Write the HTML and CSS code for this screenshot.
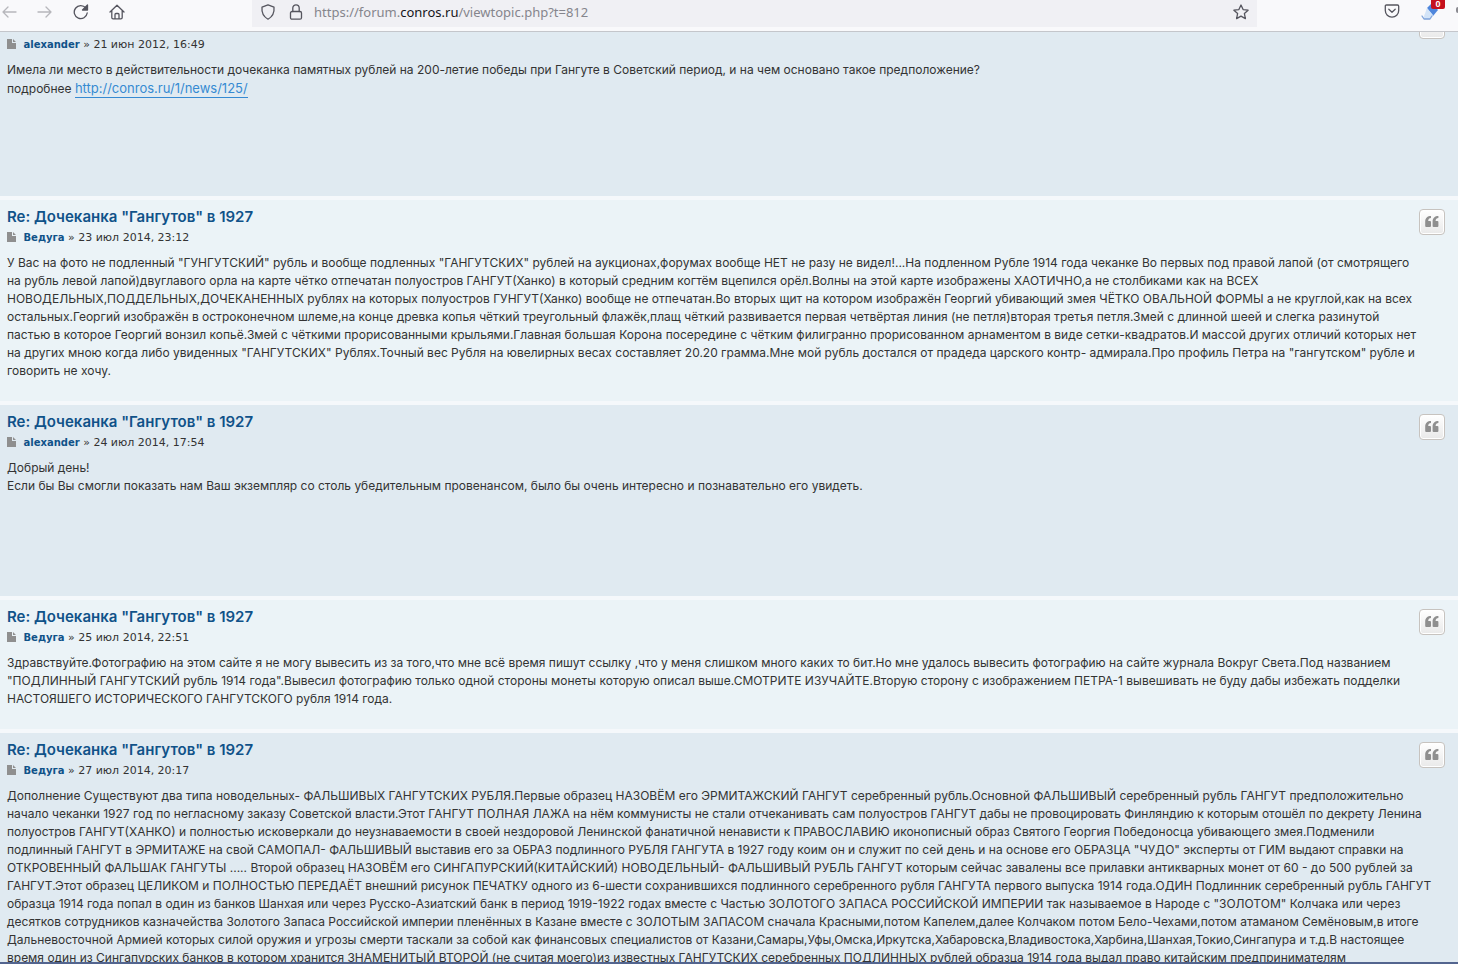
FILE: index.html
```
<!doctype html>
<html lang="ru">
    <head>
        <meta charset="UTF-8" />
        <title>Дочеканка "Гангутов" в 1927</title>
        <link rel="stylesheet" href="styles.css">
    </head>

    <body>
        <svg width="0" height="0" class="sprite">
            <symbol id="file" viewBox="0 0 9 10">
                <path d="M0 0h5v4h4v6H0z M6 0l3 3H6z" fill="#8f8f8f" />
            </symbol>
            <symbol id="quote" viewBox="0 0 14 12">
                <path
                    d="M6 0v2C4.300 2 3.200 3 3.200 5H5q1 0 1 1v4q0 1-1 1H1.200q-1 0-1-1V5.500C.2 2 2.500 0 6 0z M13.400 0v2c-1.700 0-2.800 1-2.800 3h1.800q1 0 1 1v4q0 1-1 1H8.600q-1 0-1-1V5.500C7.600 2 9.900 0 13.400 0z"
                    fill="#8f8f8f"
                />
            </symbol>
        </svg>

        <header class="toolbar">
            <nav class="nav-buttons">
                <button class="disabled" aria-label="Назад">
                    <svg width="16" height="16" viewBox="0 0 16 16"><path d="M15 8H2M7 3L2 8l5 5" /></svg>
                </button>
                <button class="disabled" aria-label="Вперёд">
                    <svg width="16" height="16" viewBox="0 0 16 16"><path d="M1 8h13M9 3l5 5-5 5" /></svg>
                </button>
                <button aria-label="Обновить">
                    <svg width="16" height="16" viewBox="0 0 16 16">
                        <path d="M14.200 9A6.500 6.500 0 1 1 12.800 4" />
                        <path d="M14.500 1v5h-5z" class="solid" />
                    </svg>
                </button>
                <button aria-label="Домой">
                    <svg width="16" height="16" viewBox="0 0 16 16">
                        <path d="M1 8l7-6.800L15 8M2.800 6.500v7q0 1.300 1.300 1.300h7.800q1.300 0 1.300-1.300v-7M6 14.500v-4q0-1 1-1h2q1 0 1 1v4" />
                    </svg>
                </button>
            </nav>
            <div class="address">
                <svg width="16" height="16" viewBox="0 0 16 16">
                    <path d="M8 .8l6 2.300c.5 5-1.200 9.400-6 12.100C3.200 12.500 1.500 8.100 2 3.100z" />
                </svg>
                <svg width="16" height="16" viewBox="0 0 16 16">
                    <rect x="2.500" y="7.500" width="11" height="7.700" rx="1.500" />
                    <path d="M4.800 7.500V4a3.200 3.200 0 0 1 6.400 0v3.500" />
                </svg>
                <a class="url" href="#">https://forum.<b>conros.ru</b>/viewtopic.php?t=812</a>
                <button aria-label="Добавить в закладки">
                    <svg width="16" height="16" viewBox="0 0 16 16">
                        <path d="M8 1l2.100 4.600 5 .6-3.700 3.400 1 5L8 12.100l-4.400 2.500 1-5L.9 6.200l5-.6z" />
                    </svg>
                </button>
            </div>
            <div class="extensions">
                <button aria-label="Pocket">
                    <svg width="16" height="16" viewBox="0 0 16 16">
                        <path d="M2.500 2h11q1.200 0 1.200 1.200V7.500a6.700 6.700 0 0 1-13.400 0V3.200Q1.300 2 2.500 2zM4.800 6.200L8 9.200l3.200-3" />
                    </svg>
                </button>
                <button class="addon" aria-label="Расширение">
                    <svg width="20" height="18" viewBox="0 0 20 18">
                        <path d="M7 5l5-5 6 7-5 6z" fill="#4f86dc" stroke="none" />
                        <path d="M7 5l6 7-3 4H3z" fill="#d3e4f8" stroke="none" />
                        <path d="M2 13l2 3h6l2-3" stroke="#7fa3da" />
                    </svg>
                    <span class="badge">0</span>
                </button>
                <button class="menu" aria-label="Меню"></button>
            </div>
        </header>

        <main class="posts">
            <article class="post bg2 first">
                <div class="postbody">
                    <p class="author">
                        <svg width="9" height="10"><use href="#file" /></svg>
                        <a href="#">alexander</a> » 21 июн 2012, 16:49
                    </p>
                    <div class="content">
                        Имела ли место в действительности дочеканка памятных рублей на 200-летие победы при Гангуте в Советский период, и на чем основано такое предположение?<br />
                        подробнее <a class="postlink" href="#">http://conros.ru/1/news/125/</a>
                    </div>
                </div>
                <button class="quote" aria-label="Цитата"></button>
            </article>

            <article class="post bg1">
                <div class="postbody">
                    <h3><a href="#">Re: Дочеканка "Гангутов" в 1927</a></h3>
                    <p class="author">
                        <svg width="9" height="10"><use href="#file" /></svg>
                        <a href="#">Ведуга</a> » 23 июл 2014, 23:12
                    </p>
                    <div class="content">
                        У Вас на фото не подленный "ГУНГУТСКИЙ" рубль и вообще подленных "ГАНГУТСКИХ" рублей на аукционах,форумах вообще НЕТ не разу не видел!...На подленном Рубле 1914 года чеканке Во первых под правой лапой (от смотрящего<br />
                        на рубль левой лапой)двуглавого орла на карте чётко отпечатан полуостров ГАНГУТ(Ханко) в который средним когтём вцепился орёл.Волны на этой карте изображены ХАОТИЧНО,а не столбиками как на ВСЕХ<br />
                        НОВОДЕЛЬНЫХ,ПОДДЕЛЬНЫХ,ДОЧЕКАНЕННЫХ рублях на которых полуостров ГУНГУТ(Ханко) вообще не отпечатан.Во вторых щит на котором изображён Георгий убивающий змея ЧЁТКО ОВАЛЬНОЙ ФОРМЫ а не круглой,как на всех<br />
                        остальных.Георгий изображён в остроконечном шлеме,на конце древка копья чёткий треугольный флажёк,плащ чёткий развивается первая четвёртая линия (не петля)вторая третья петля.Змей с длинной шеей и слегка разинутой<br />
                        пастью в которое Георгий вонзил копьё.Змей с чёткими прорисованными крыльями.Главная большая Корона посередине с чётким филигранно прорисованном арнаментом в виде сетки-квадратов.И массой других отличий которых нет<br />
                        на других мною когда либо увиденных "ГАНГУТСКИХ" Рублях.Точный вес Рубля на ювелирных весах составляет 20.20 грамма.Мне мой рубль достался от прадеда царского контр- адмирала.Про профиль Петра на "гангутском" рубле и<br />
                        говорить не хочу.
                    </div>
                </div>
                <button class="quote" aria-label="Цитата"><svg width="14" height="12"><use href="#quote" /></svg></button>
            </article>

            <article class="post bg2">
                <div class="postbody">
                    <h3><a href="#">Re: Дочеканка "Гангутов" в 1927</a></h3>
                    <p class="author">
                        <svg width="9" height="10"><use href="#file" /></svg>
                        <a href="#">alexander</a> » 24 июл 2014, 17:54
                    </p>
                    <div class="content">
                        Добрый день!<br />
                        Если бы Вы смогли показать нам Ваш экземпляр со столь убедительным провенансом, было бы очень интересно и познавательно его увидеть.
                    </div>
                </div>
                <button class="quote" aria-label="Цитата"><svg width="14" height="12"><use href="#quote" /></svg></button>
            </article>

            <article class="post bg1">
                <div class="postbody">
                    <h3><a href="#">Re: Дочеканка "Гангутов" в 1927</a></h3>
                    <p class="author">
                        <svg width="9" height="10"><use href="#file" /></svg>
                        <a href="#">Ведуга</a> » 25 июл 2014, 22:51
                    </p>
                    <div class="content">
                        Здравствуйте.Фотографию на этом сайте я не могу вывесить из за того,что мне всё время пишут ссылку ,что у меня слишком много каких то бит.Но мне удалось вывесить фотографию на сайте журнала Вокруг Света.Под названием<br />
                        "ПОДЛИННЫЙ ГАНГУТСКИЙ рубль 1914 года".Вывесил фотографию только одной стороны монеты которую описал выше.СМОТРИТЕ ИЗУЧАЙТЕ.Вторую сторону с изображением ПЕТРА-1 вывешивать не буду дабы избежать подделки<br />
                        НАСТОЯШЕГО ИСТОРИЧЕСКОГО ГАНГУТСКОГО рубля 1914 года.
                    </div>
                </div>
                <button class="quote" aria-label="Цитата"><svg width="14" height="12"><use href="#quote" /></svg></button>
            </article>

            <article class="post bg2">
                <div class="postbody">
                    <h3><a href="#">Re: Дочеканка "Гангутов" в 1927</a></h3>
                    <p class="author">
                        <svg width="9" height="10"><use href="#file" /></svg>
                        <a href="#">Ведуга</a> » 27 июл 2014, 20:17
                    </p>
                    <div class="content">
                        Дополнение Существуют два типа новодельных- ФАЛЬШИВЫХ ГАНГУТСКИХ РУБЛЯ.Первые образец НАЗОВЁМ его ЭРМИТАЖСКИЙ ГАНГУТ серебренный рубль.Основной ФАЛЬШИВЫЙ серебренный рубль ГАНГУТ предположительно<br />
                        начало чеканки 1927 год по негласному заказу Советской власти.Этот ГАНГУТ ПОЛНАЯ ЛАЖА на нём коммунисты не стали отчеканивать сам полуостров ГАНГУТ дабы не провоцировать Финляндию к которым отошёл по декрету Ленина<br />
                        полуостров ГАНГУТ(ХАНКО) и полностью исковеркали до неузнаваемости в своей нездоровой Ленинской фанатичной ненависти к ПРАВОСЛАВИЮ иконописный образ Святого Георгия Победоносца убивающего змея.Подменили<br />
                        подлинный ГАНГУТ в ЭРМИТАЖЕ на свой САМОПАЛ- ФАЛЬШИВЫЙ выставив его за ОБРАЗ подлинного РУБЛЯ ГАНГУТА в 1927 году коим он и служит по сей день и на основе его ОБРАЗЦА "ЧУДО" эксперты от ГИМ выдают справки на<br />
                        ОТКРОВЕННЫЙ ФАЛЬШАК ГАНГУТЫ ..... Второй образец НАЗОВЁМ его СИНГАПУРСКИЙ(КИТАЙСКИЙ) НОВОДЕЛЬНЫЙ- ФАЛЬШИВЫЙ РУБЛЬ ГАНГУТ которым сейчас завалены все прилавки антикварных монет от 60 - до 500 рублей за<br />
                        ГАНГУТ.Этот образец ЦЕЛИКОМ и ПОЛНОСТЬЮ ПЕРЕДАЁТ внешний рисунок ПЕЧАТКУ одного из 6-шести сохранившихся подлинного серебренного рубля ГАНГУТА первого выпуска 1914 года.ОДИН Подлинник серебренный рубль ГАНГУТ<br />
                        образца 1914 года попал в один из банков Шанхая или через Русско-Азиатский банк в период 1919-1922 годах вместе с Частью ЗОЛОТОГО ЗАПАСА РОССИЙСКОЙ ИМПЕРИИ так называемое в Народе с "ЗОЛОТОМ" Колчака или через<br />
                        десятков сотрудников казначейства Золотого Запаса Российской империи пленённых в Казане вместе с ЗОЛОТЫМ ЗАПАСОМ сначала Красными,потом Капелем,далее Колчаком потом Бело-Чехами,потом атаманом Семёновым,в итоге<br />
                        Дальневосточной Армией которых силой оружия и угрозы смерти таскали за собой как финансовых специалистов от Казани,Самары,Уфы,Омска,Иркутска,Хабаровска,Владивостока,Харбина,Шанхая,Токио,Сингапура и т.д.В настоящее<br />
                        время один из Сингапурских банков в котором хранится ЗНАМЕНИТЫЙ ВТОРОЙ (не считая моего)из известных ГАНГУТСКИХ серебренных ПОДЛИННЫХ рублей образца 1914 года выдал право китайским предпринимателям
                    </div>
                </div>
                <button class="quote" aria-label="Цитата"><svg width="14" height="12"><use href="#quote" /></svg></button>
            </article>
        </main>
    </body>
</html>
```
FILE: styles.css
```
* {
    box-sizing: border-box;
    margin: 0;
    padding: 0;
}

body {
    display: flex;
    flex-direction: column;
    height: 100vh;
    overflow: hidden;
    background: #f5f8fb;
    border-bottom: 2px solid #53658f;
    font-family: Inter, sans-serif;
    font-size: 12px;
    line-height: 18px;
    color: #333;
}

.sprite {
    position: absolute;
}

button {
    border: none;
    background: none;
    cursor: pointer;
}

a {
    text-decoration: none;
}

/* browser toolbar */
.toolbar {
    display: flex;
    flex-shrink: 0;
    justify-content: space-between;
    height: 32px;
    background: #f9f9fb;
    border-bottom: 1px solid #c4c6cb;
    overflow: hidden;
}

.toolbar svg {
    display: block;
    flex-shrink: 0;
    fill: none;
    stroke: #55555e;
    stroke-width: 1.3;
    stroke-linecap: round;
    stroke-linejoin: round;
}

.toolbar .solid {
    fill: #55555e;
}

.nav-buttons {
    display: flex;
    gap: 20px;
    width: 252px;
    padding: 4px 0 0 1px;
    align-items: flex-start;
}

.nav-buttons .disabled {
    opacity: 0.4;
}

.address {
    display: flex;
    flex: 1;
    gap: 12px;
    height: 27px;
    padding: 0 8px 4px;
    align-items: center;
    background: #f0f0f4;
}

.url {
    flex: 1;
    margin-left: -2px;
    font: 13px "Noto Sans", sans-serif;
    color: #85858c;
}

.url b {
    font-weight: 400;
    color: #15141a;
}

.extensions {
    display: flex;
    gap: 20px;
    width: 201px;
    padding-top: 3px;
    justify-content: flex-end;
    align-items: flex-start;
}

.addon {
    position: relative;
}

.badge {
    position: absolute;
    top: -3px;
    right: -5px;
    width: 14px;
    height: 9px;
    border-radius: 0 0 2px 2px;
    background: #c5101c;
    color: #fff;
    font: bold 9px/9px "Liberation Sans", sans-serif;
}

.menu {
    width: 2px;
    height: 6px;
    margin: 4px 0 0 -4px;
    border-radius: 2px 0 0 2px;
    background: #8a8a90;
}

/* posts */
.posts {
    display: flex;
    flex: 1;
    flex-direction: column;
    gap: 4px;
    min-height: 0;
    overflow: hidden;
}

.post {
    display: flex;
    flex-shrink: 0;
    gap: 8px;
    padding: 8px 13px 21px 7px;
    align-items: flex-start;
}

.bg1 {
    background: #ebf3f7;
}

.bg2 {
    min-height: 191px;
    background: #e0eaf1;
}

.postbody {
    flex: 1;
    min-width: 0;
}

h3 {
    font-size: 15px;
    font-weight: 600;
    line-height: 18px;
}

h3 a,
.author a {
    color: #105289;
}

.author {
    margin: 4px 0 8px;
    font: 11px/16px "DejaVu Sans", sans-serif;
}

.author svg {
    margin-right: 4px;
    vertical-align: -1px;
}

.author a {
    font-size: 10px;
    font-weight: bold;
}

.content {
    /* long lines run under the quote button column */
    white-space: nowrap;
}

.postlink {
    padding-bottom: 1px;
    border-bottom: 1px solid #368ad2;
    color: #368ad2;
    font-size: 13px;
}

.quote {
    display: flex;
    flex-shrink: 0;
    width: 26px;
    height: 26px;
    margin-top: 1px;
    align-items: center;
    justify-content: center;
    border: 1px solid #c7c3bf;
    border-radius: 4px;
    background: linear-gradient(#fff, #e9e9e9);
    box-shadow: inset 0 0 0 1px #fff;
}

/* top of the first post is scrolled out of view */
.first {
    min-height: 164px;
    padding-top: 1px;
    overflow: hidden;
}

.first .quote {
    margin-top: -20px;
}
```
